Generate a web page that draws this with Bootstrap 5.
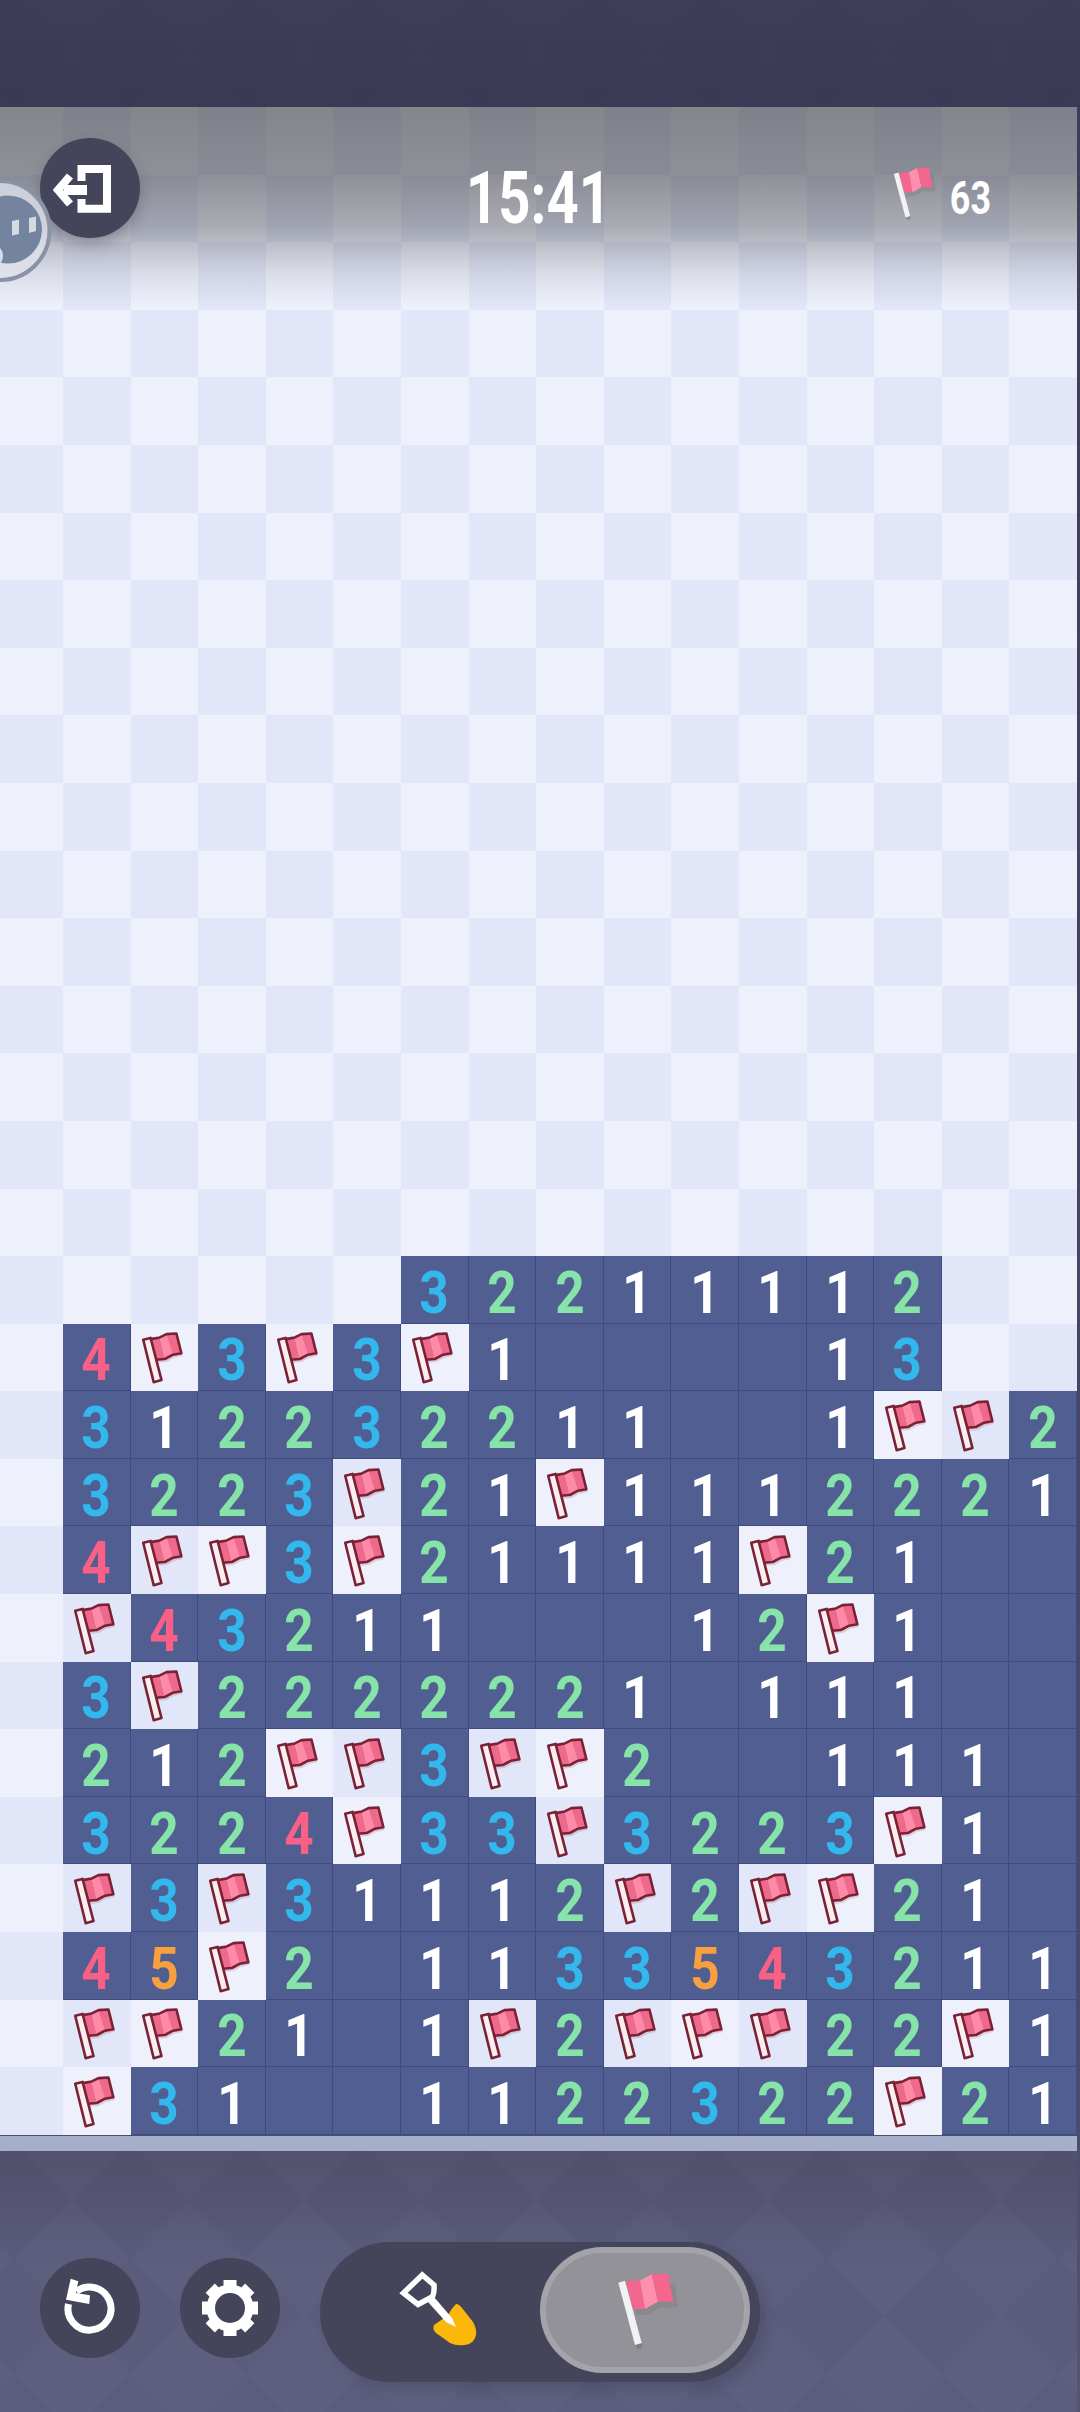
<!DOCTYPE html>
<html lang="en">
<head>
  <meta charset="UTF-8">
  <title>Minesweeper</title>
  <meta name="viewport" content="width=device-width, initial-scale=1">
  <link href="https://cdn.jsdelivr.net/npm/bootstrap@5.3.3/dist/css/bootstrap.min.css" rel="stylesheet">
  <style>
    html, body { height: 100%; }
    body { background: linear-gradient(#3d3c56, #4a4a6c 85%, #55556f); overflow: hidden; font-family: Roboto, "Liberation Sans", sans-serif; }
    .game { width: 1080px; height: 2412px; }

    .wall { height: 107px; background: linear-gradient(#3f3e58, #3b3a54); }
    .tex { width: 100%; height: 100%; top: 0; left: 0; }

    /* board */
    .board-wrap { width: 1077px; height: 2028.7px; }
    .board { display: grid; grid-template-columns: repeat(16, 67.6px); grid-auto-rows: 67.6px; margin-left: -4.6px; }
    .tile { display: flex; align-items: center; justify-content: center; }
    .tile-a { background: #eef0fc; }
    .tile-b { background: #e1e6f8; }
    .tile-open { background: #505e92; border-right: 1px solid #3f4b82; border-bottom: 1px solid #3f4b82; }
    .tile svg { width: 68px; height: 68px; display: block; }
    .digit { display: inline-block; font-size: 59px; font-weight: 700; line-height: 1; transform: scaleX(.87); padding-top: 6px; }
    .d1 { color: #fff; }
    .d2 { color: #86e4a8; }
    .d3 { color: #33b8ee; }
    .d4 { color: #fa5f85; }
    .d5 { color: #f8a040; }

    /* top overlay */
    .shade { top: 0; left: 0; right: 0; height: 200px; pointer-events: none;
      background: linear-gradient(rgba(50,50,52,.56) 0, rgba(50,50,52,.5) 68px, rgba(50,50,52,.36) 120px, rgba(50,50,52,.22) 145px, rgba(50,50,52,.09) 170px, rgba(50,50,52,0) 200px); }
    .hud { top: 0; left: 0; right: 0; }
    .hud-col { flex: 1 1 0; min-width: 0; }
    .circle-btn { width: 100px; height: 100px; background: #44445a; border: 0; padding: 0; border-radius: 50%; flex: none; }
    .circle-btn:hover, .circle-btn:active { background: #44445a !important; }
    .exit-btn { margin: 31px 0 0 40px; box-shadow: 0 6px 14px rgba(40,40,60,.3); }
    .pause-btn { left: 0; top: 73px; width: 60px; height: 110px; }
    .timer { font-size: 73px; font-weight: 700; color: #fff; line-height: 1; transform: scaleX(.77); margin-top: 55px; }
    .flag-count { padding: 51px 85px 0 0; }
    .flag-count svg { width: 70px; height: 70px; flex: none; }
    .count { font-size: 46px; font-weight: 700; color: #fff; line-height: 1; transform: scaleX(.78); margin: 17px -5px 0 -7px; }

    /* bottom */
    .rim { width: 1077px; height: 15px; background: #a5aecb; }
    .dock { height: 261.3px; padding: 107px 0 0 40px; gap: 40px; background: linear-gradient(#53526e, #5e5f7f 45%, #5f6080); width: 1077px; }
    .mode-switch { width: 440px; height: 140px; margin-top: -16px; border-radius: 70px; background: #44445a; box-shadow: 8px 8px 12px rgba(40,40,60,.22); z-index: 1; padding: 5px 10px 9px 0; }
    .mode-dig { width: 220px; }
    .mode-dig svg { width: 120px; height: 110px; margin-top: -10px; margin-left: 20px; }
    .mode-knob { width: 210px; height: 126px; border-radius: 63px; background: #929298; border: 6px solid #a3a3a9; }
    .mode-knob svg { width: 100px; height: 100px; margin-left: 10px; }
  </style>
</head>
<body>
  <!-- shared drawings -->
  <svg width="0" height="0" class="position-absolute">
    <defs>
      <pattern id="argyle" width="116" height="116" patternUnits="userSpaceOnUse" patternTransform="translate(72 -9)">
        <polygon points="58,0 116,58 58,116 0,58" fill="#1c1c3c"/>
      </pattern>
      <symbol id="flag-cell" viewBox="0 0 68 68">
        <polygon points="20,16 29,14.3 35.7,11 45.7,10.3 51,31 42.3,33 35,37 25,38" fill="#a03048" opacity=".18" transform="translate(1 2)"/>
        <polygon points="19.7,16 29,14.3 34,35.5 25,36.7" fill="#ee6a8c"/>
        <polygon points="29,14.3 35.7,11 42,10.6 43,31.5 34,35.5" fill="#ff8aa8"/>
        <polygon points="35.7,11 45.7,10.3 50.7,30.3 42.3,31.7" fill="#ee6a8c"/>
        <path d="M19.7 16 L29 14.3 L35.7 11 L45.7 10.3 L50.7 30.3 L42.3 31.7 L34 36 L25 36.7" fill="none" stroke="#7a2235" stroke-width="2.6" stroke-linejoin="round"/>
        <polygon points="12.3,16.7 19.7,14.8 30.7,57.2 22.8,59.3" fill="#fbeef0" stroke="#7a2235" stroke-width="2.6" stroke-linejoin="round"/>
      </symbol>
      <symbol id="flag-plain" viewBox="0 0 100 100">
        <polygon points="35,85 42,83 42,88 37,89" fill="#555" opacity=".3"/>
        <polygon points="33,24 75,22 78,45 60,46 47,53 36,53" fill="#555" opacity=".16" transform="translate(0 2)"/>
        <polygon points="26,21 40,20.5 45,49 33,49" fill="#f4668e"/>
        <polygon points="40,20.5 51.7,14.3 58,41.5 45,49" fill="#ff8fad"/>
        <polygon points="51.7,14.3 68.3,14 73.3,41.7 58,41.5" fill="#f4668e"/>
        <polygon points="18.3,22.7 25,20.7 41.7,83 35,85" fill="#f2f2f5"/>
      </symbol>
    </defs>
  </svg>

  <div class="game d-flex flex-column">
    <div class="wall position-relative flex-shrink-0">
      <svg class="tex position-absolute"><rect width="100%" height="100%" fill="url(#argyle)" opacity=".03"/></svg>
    </div>

    <div class="board-wrap position-relative flex-shrink-0">
      <div id="board" class="board"></div>
      <div class="shade position-absolute"></div>

      <div class="hud position-absolute d-flex align-items-start">
        <div class="hud-col">
          <button class="btn circle-btn exit-btn d-block" aria-label="Exit">
            <svg width="100" height="100" viewBox="0 0 100 100" class="d-block">
              <path d="M41.5 43 V31 H67 V70.7 H41.5 V61" fill="none" stroke="#fff" stroke-width="8"/>
              <path d="M24 52 H47" stroke="#fff" stroke-width="10"/>
              <path d="M30 38 L18 52 L30 66" fill="none" stroke="#fff" stroke-width="8"/>
            </svg>
          </button>
        </div>
        <div class="hud-col text-center"><div class="timer">15:41</div></div>
        <div class="hud-col">
          <div class="flag-count d-flex justify-content-end align-items-start">
            <svg><use href="#flag-plain"/></svg>
            <span class="count">63</span>
          </div>
        </div>
      </div>

      <svg class="pause-btn position-absolute" viewBox="0 0 60 110">
        <circle cx="0" cy="50.5" r="49.5" fill="#dfe2ea" fill-opacity=".78" stroke="#8a92a5" stroke-width="4"/>
        <circle cx="8" cy="49.5" r="34" fill="#74849f"/>
        <circle cx="-10" cy="76" r="13" fill="#d8dce4"/>
        <polygon points="12,41 19,39.5 19,54 12,55.5" fill="#d5dae2"/>
        <polygon points="29,38 36,36.5 36,51 29,53" fill="#d5dae2"/>
      </svg>
    </div>

    <div class="rim flex-shrink-0"></div>

    <div class="dock position-relative d-flex align-items-start flex-shrink-0">
      <svg class="tex position-absolute"><rect width="100%" height="100%" fill="url(#argyle)" opacity=".05"/></svg>

      <button class="btn circle-btn position-relative" aria-label="Undo">
        <svg width="100" height="100" viewBox="0 0 100 100" class="d-block">
          <path d="M28.5 46 A21.5 21.5 0 1 0 36.5 33.5" fill="none" stroke="#fff" stroke-width="7"/>
          <polygon points="30.7,20.7 38.3,23.3 36,35 50,37.3 49.3,46 26,41.7" fill="#fff"/>
        </svg>
      </button>

      <button class="btn circle-btn position-relative" aria-label="Settings">
        <svg width="100" height="100" viewBox="0 0 100 100" class="d-block">
          <g stroke="#fff" stroke-width="13">
            <line x1="50" y1="22" x2="50" y2="78"/>
            <line x1="22" y1="50" x2="78" y2="50"/>
            <line x1="30.2" y1="30.2" x2="69.8" y2="69.8"/>
            <line x1="69.8" y1="30.2" x2="30.2" y2="69.8"/>
          </g>
          <circle cx="50" cy="50" r="23.5" fill="#fff"/>
          <circle cx="50" cy="50" r="15" fill="#44445a"/>
        </svg>
      </button>

      <div class="mode-switch position-relative d-flex align-items-center">
        <div class="mode-dig d-flex justify-content-center">
          <svg viewBox="0 0 120 110">
            <path d="M76 54 Q79 54 82 58 L93 72 Q97 79 96 85 Q94 94 85 95 Q76 96 70 93 L56 83 Q52 79 54 75 Q60 71 68 65 Q72 58 76 54 Z" fill="#fbb80a"/>
            <path d="M42.3 25 L54 35 Q54.5 44 52 47 L38 54.5 L23.5 43 Z" fill="none" stroke="#fff" stroke-width="5.5"/>
            <polygon points="48,52 54,47 72,68 76,77 66,72" fill="#fff"/>
          </svg>
        </div>
        <div class="mode-knob d-flex align-items-center justify-content-center">
          <svg><use href="#flag-plain"/></svg>
        </div>
      </div>
    </div>
  </div>

  <script>
    // . = hidden, 0 = open and empty, F = flag
    const rows = {
      17: '......32211112..',
      18: '.4F3F3F1000013..',
      19: '.312232211001FF2',
      20: '.3223F21F1112221',
      21: '.4FF3F21111F2100',
      22: '.F4321100012F100',
      23: '.3F2222221011100',
      24: '.212FF3FF2001110',
      25: '.3224F33F3223F10',
      26: '.F3F31112F2FF210',
      27: '.45F201133543211',
      28: '.FF2101F2FFF22F1',
      29: '.F31001122322F21'
    };
    const board = document.getElementById('board');
    for (let r = 0; r < 30; r++) {
      const row = rows[r] || '';
      for (let c = 0; c < 16; c++) {
        const v = row[c] || '.';
        const tile = document.createElement('div');
        const checker = (r + c) % 2 === 0 ? 'tile-a' : 'tile-b';
        if (v === '.') {
          tile.className = 'tile ' + checker;
        } else if (v === 'F') {
          tile.className = 'tile ' + checker;
          tile.innerHTML = '<svg><use href="#flag-cell"/></svg>';
        } else {
          tile.className = 'tile tile-open';
          if (v !== '0') tile.innerHTML = '<span class="digit d' + v + '">' + v + '</span>';
        }
        board.appendChild(tile);
      }
    }
  </script>
  <script src="https://cdn.jsdelivr.net/npm/bootstrap@5.3.3/dist/js/bootstrap.bundle.min.js"></script>
</body>
</html>
